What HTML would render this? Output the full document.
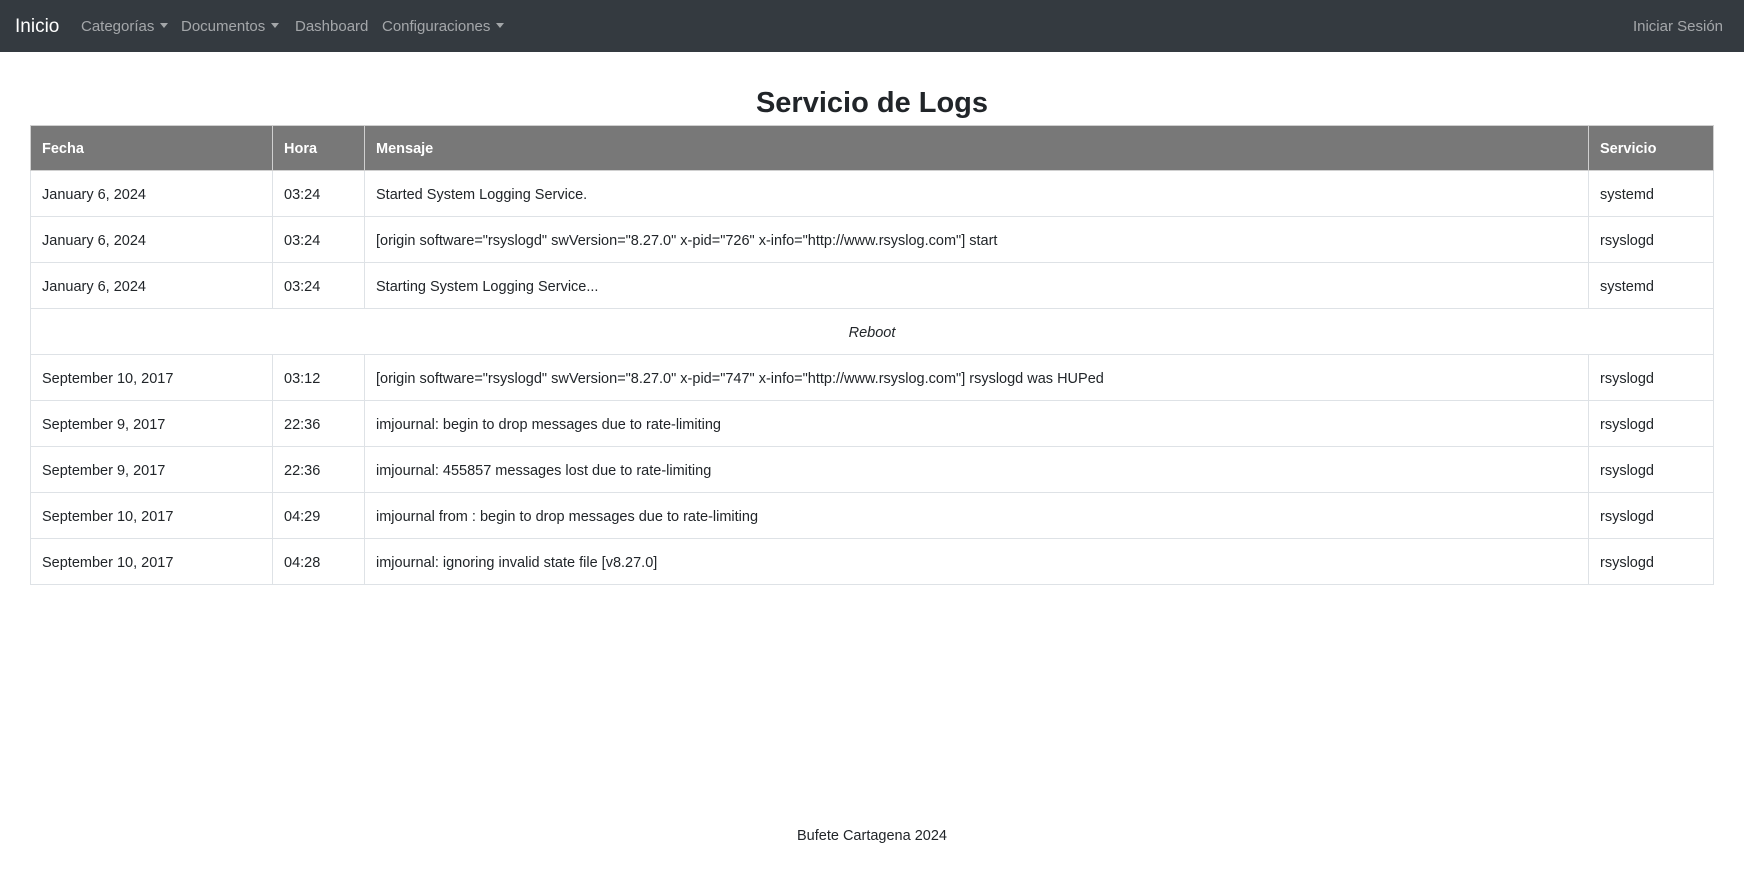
<!DOCTYPE html>
<html><head><meta charset="utf-8"><style>
body{margin:0;width:1744px;height:892px;background:#fff;font-family:"Liberation Sans",sans-serif;color:#212529;overflow:hidden}
.nav{height:52px;background:#343a40;position:relative}
.nav span{position:absolute;top:1px;line-height:52px;color:rgba(255,255,255,.55);font-size:15px}
.nav .brand{color:#fff;font-size:19px;left:15px}
.caret{display:inline-block;border-top:5px solid rgba(255,255,255,.55);border-left:4px solid transparent;border-right:4px solid transparent;vertical-align:3px;margin-left:6px}
h1{position:absolute;top:83px;left:0;width:1744px;text-align:center;margin:0;font-size:29px;font-weight:bold;line-height:40px}
table{position:absolute;top:125px;left:30px;width:1684px;border-collapse:collapse;font-size:14.5px}
td,th{border:1px solid #dee2e6;padding:2px 11px 0;height:43px;text-align:left}
th{background:#787878;color:#fff;font-weight:bold;border-color:#d0d0d0;height:42px}
.footer{position:absolute;top:828px;width:1744px;text-align:center;font-size:14.5px}
</style></head><body>
<div class="nav">
<span class="brand">Inicio</span>
<span style="left:81px">Categorías<i class="caret"></i></span>
<span style="left:181px">Documentos<i class="caret"></i></span>
<span style="left:295px">Dashboard</span>
<span style="left:382px">Configuraciones<i class="caret"></i></span>
<span style="right:21px">Iniciar Sesión</span>
</div>
<h1>Servicio de Logs</h1>
<table>
<tr><th style="width:219px">Fecha</th><th style="width:69px">Hora</th><th>Mensaje</th><th style="width:102px">Servicio</th></tr>
<tr><td>January 6, 2024</td><td>03:24</td><td>Started System Logging Service.</td><td>systemd</td></tr>
<tr><td>January 6, 2024</td><td>03:24</td><td>[origin software="rsyslogd" swVersion="8.27.0" x-pid="726" x-info="http://www.rsyslog.com"] start</td><td>rsyslogd</td></tr>
<tr><td>January 6, 2024</td><td>03:24</td><td>Starting System Logging Service...</td><td>systemd</td></tr>
<tr><td colspan="4" style="text-align:center;font-style:italic">Reboot</td></tr>
<tr><td>September 10, 2017</td><td>03:12</td><td>[origin software="rsyslogd" swVersion="8.27.0" x-pid="747" x-info="http://www.rsyslog.com"] rsyslogd was HUPed</td><td>rsyslogd</td></tr>
<tr><td>September 9, 2017</td><td>22:36</td><td>imjournal: begin to drop messages due to rate-limiting</td><td>rsyslogd</td></tr>
<tr><td>September 9, 2017</td><td>22:36</td><td>imjournal: 455857 messages lost due to rate-limiting</td><td>rsyslogd</td></tr>
<tr><td>September 10, 2017</td><td>04:29</td><td>imjournal from : begin to drop messages due to rate-limiting</td><td>rsyslogd</td></tr>
<tr><td>September 10, 2017</td><td>04:28</td><td>imjournal: ignoring invalid state file [v8.27.0]</td><td>rsyslogd</td></tr>
</table>
<div class="footer">Bufete Cartagena 2024</div>
</body></html>
